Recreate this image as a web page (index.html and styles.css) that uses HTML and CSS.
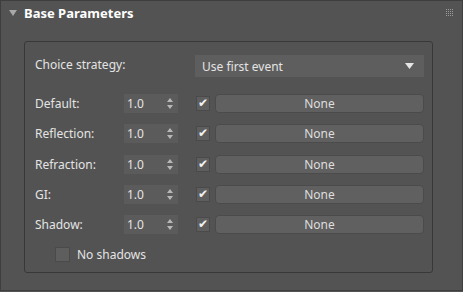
FILE: index.html
```html
<!DOCTYPE html>
<html lang="en">
<head>
    <meta charset="UTF-8">
    <title>Base Parameters</title>
    <link rel="stylesheet" href="styles.css">
</head>
<body>
    <div class="panel">
        <div class="rollout-head">
            <span class="caret"></span>
            <span class="title">Base Parameters</span>
            <svg class="grip" width="7" height="7" viewBox="0 0 7 7">
                <g fill="#9a9a9a">
                    <rect x="0" y="0" width="1" height="1"/><rect x="2" y="0" width="1" height="1"/><rect x="4" y="0" width="1" height="1"/><rect x="6" y="0" width="1" height="1"/>
                    <rect x="0" y="2" width="1" height="1"/><rect x="2" y="2" width="1" height="1"/><rect x="4" y="2" width="1" height="1"/><rect x="6" y="2" width="1" height="1"/>
                    <rect x="0" y="4" width="1" height="1"/><rect x="2" y="4" width="1" height="1"/><rect x="4" y="4" width="1" height="1"/><rect x="6" y="4" width="1" height="1"/>
                    <rect x="0" y="6" width="1" height="1"/><rect x="2" y="6" width="1" height="1"/><rect x="4" y="6" width="1" height="1"/><rect x="6" y="6" width="1" height="1"/>
                </g>
            </svg>
        </div>

        <div class="group">
            <div class="choice">
                <span class="choice-label">Choice strategy:</span>
                <div class="dropdown">
                    <span>Use first event</span>
                    <svg width="9" height="6" viewBox="0 0 9 6"><path d="M0 0H9L4.5 6Z" fill="#e6e6e6"/></svg>
                </div>
            </div>

            <div class="rows">
                <div class="row">
                    <span class="lbl">Default:</span>
                    <div class="spinner"><span>1.0</span><svg width="6" height="11" viewBox="0 0 6 11"><path d="M3 0L6 4H0Z M0 7H6L3 11Z" fill="#b8b8b8"/></svg></div>
                    <span class="check">&#10004;</span>
                    <button class="map">None</button>
                </div>
                <div class="row">
                    <span class="lbl">Reflection:</span>
                    <div class="spinner"><span>1.0</span><svg width="6" height="11" viewBox="0 0 6 11"><path d="M3 0L6 4H0Z M0 7H6L3 11Z" fill="#b8b8b8"/></svg></div>
                    <span class="check">&#10004;</span>
                    <button class="map">None</button>
                </div>
                <div class="row">
                    <span class="lbl">Refraction:</span>
                    <div class="spinner"><span>1.0</span><svg width="6" height="11" viewBox="0 0 6 11"><path d="M3 0L6 4H0Z M0 7H6L3 11Z" fill="#b8b8b8"/></svg></div>
                    <span class="check">&#10004;</span>
                    <button class="map">None</button>
                </div>
                <div class="row">
                    <span class="lbl">GI:</span>
                    <div class="spinner"><span>1.0</span><svg width="6" height="11" viewBox="0 0 6 11"><path d="M3 0L6 4H0Z M0 7H6L3 11Z" fill="#b8b8b8"/></svg></div>
                    <span class="check">&#10004;</span>
                    <button class="map">None</button>
                </div>
                <div class="row">
                    <span class="lbl">Shadow:</span>
                    <div class="spinner"><span>1.0</span><svg width="6" height="11" viewBox="0 0 6 11"><path d="M3 0L6 4H0Z M0 7H6L3 11Z" fill="#b8b8b8"/></svg></div>
                    <span class="check">&#10004;</span>
                    <button class="map">None</button>
                </div>
            </div>

            <div class="noshadow">
                <span class="box"></span>
                <span>No shadows</span>
            </div>
        </div>
    </div>
</body>
</html>
```

FILE: styles.css
```css
body {
    margin: 0;
    background-color: #535353;
    font-family: "Noto Sans", "Open Sans", sans-serif;
    font-size: 12px;
    color: #e4e4e4;
}

.panel {
    width: 463px;
    height: 291px;
    box-sizing: border-box;
    border: 1px solid #3e3e3e;
    background-color: #535353;
}

.rollout-head {
    display: flex;
    align-items: center;
    height: 23px;
    padding-left: 8px;
}

.caret {
    width: 0;
    height: 0;
    border-left: 4px solid transparent;
    border-right: 4px solid transparent;
    border-top: 6px solid #a8a8a8;
    margin-right: 7px;
}

.title {
    font-weight: bold;
    font-size: 13px;
    color: #ffffff;
}

.grip {
    margin-left: auto;
    margin-right: 9px;
}

.group {
    margin: 17px 0 0 23px;
    width: 409px;
    height: 232px;
    box-sizing: border-box;
    border: 1px solid #383838;
    border-radius: 3px;
    padding: 13px 8px 0 10px;
}

.choice {
    display: flex;
    align-items: center;
}

.choice-label {
    width: 160px;
    align-self: flex-start;
    padding-top: 1px;
}

.dropdown {
    flex: 1;
    height: 22px;
    display: flex;
    align-items: center;
    justify-content: space-between;
    padding: 0 10px 0 7px;
    background-color: #5e5e5e;
}

.rows {
    margin-top: 17px;
    display: flex;
    flex-direction: column;
    gap: 11.25px;
}

.row {
    display: flex;
    align-items: center;
    height: 19px;
}

.lbl {
    width: 89px;
}

.spinner {
    width: 54px;
    height: 19px;
    box-sizing: border-box;
    display: flex;
    align-items: center;
    justify-content: space-between;
    padding: 0 5px 0 3px;
    background-color: #5b5b5b;
    margin-right: 18px;
}

.check {
    width: 14px;
    height: 15px;
    box-sizing: border-box;
    background-color: #5e5e5e;
    border: 1px solid #4a4a4a;
    font-family: "DejaVu Sans", sans-serif;
    font-size: 12px;
    line-height: 13px;
    text-align: center;
    color: #f2f2f2;
    margin-right: 5px;
    overflow: hidden;
}

.map {
    flex: 1;
    height: 19px;
    padding: 0;
    background-color: #606060;
    border: 1px solid #4b4b4b;
    border-radius: 4px;
    font-family: inherit;
    font-size: 12px;
    color: #dedede;
}

.noshadow {
    display: flex;
    align-items: center;
    margin: 12px 0 0 20px;
}

.box {
    width: 15px;
    height: 15px;
    box-sizing: border-box;
    background-color: #5e5e5e;
    border: 1px solid #4a4a4a;
    margin-right: 7px;
}
```
